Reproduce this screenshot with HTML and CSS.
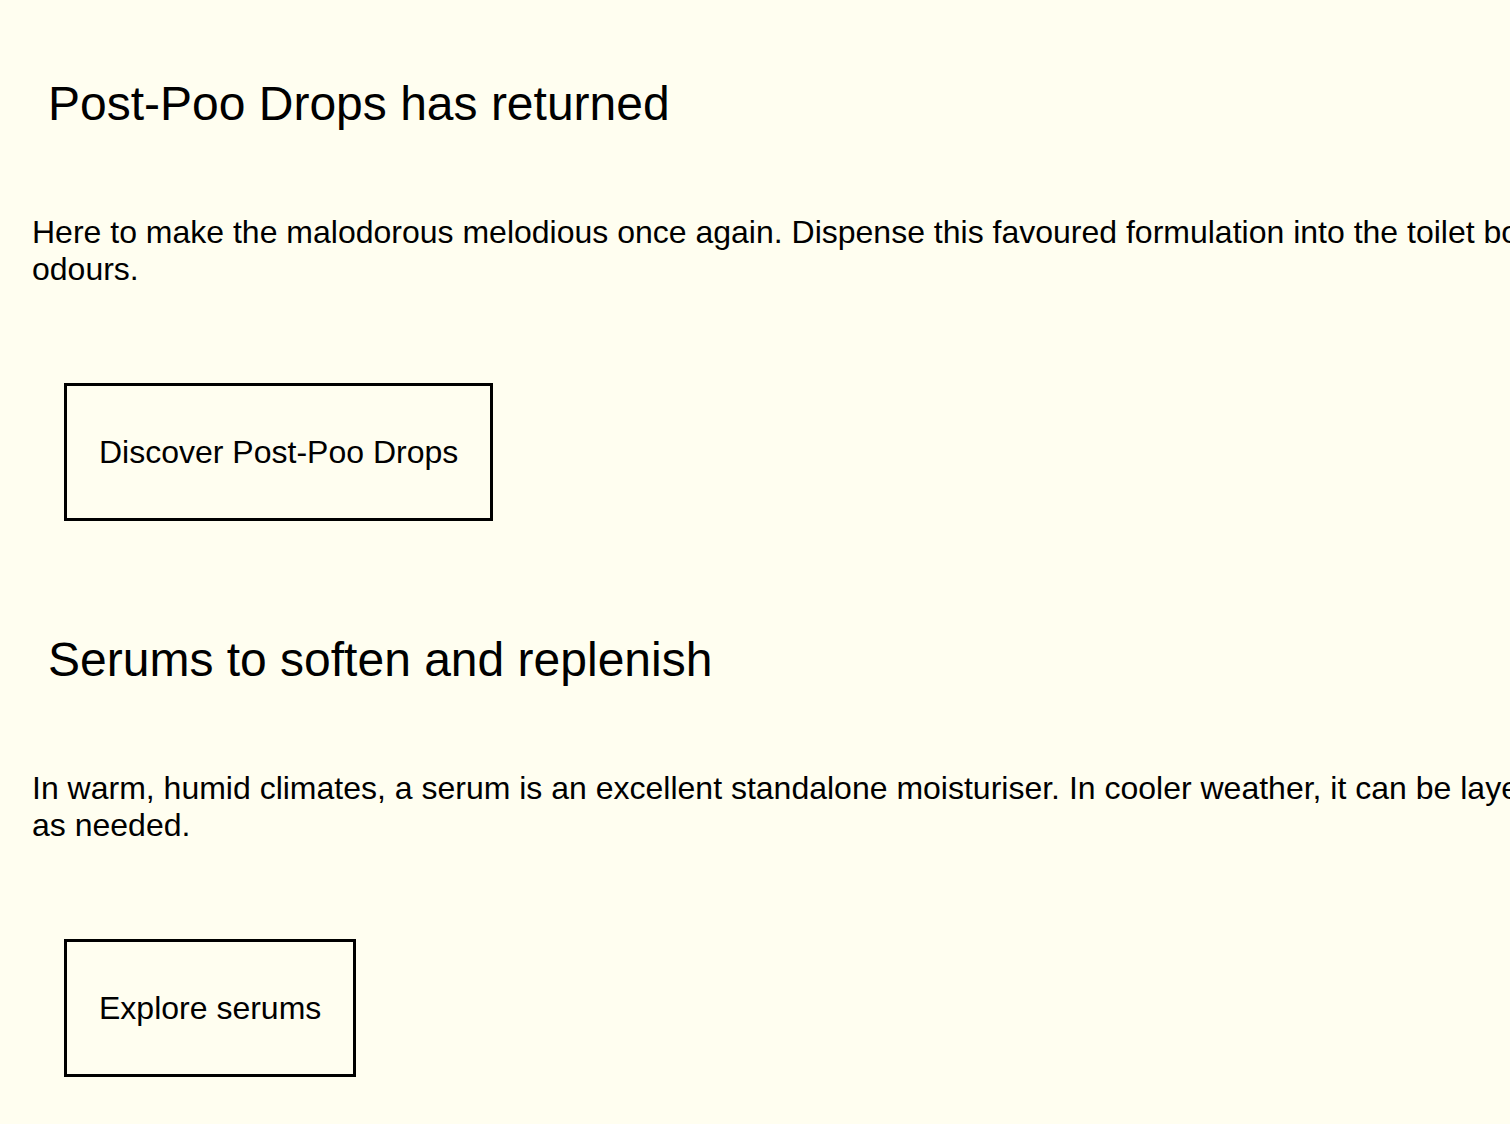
FILE: index.html
```html
<!DOCTYPE html>
<html lang="en">
<head>
<meta charset="utf-8">
<title>Post-Poo Drops</title>
<link rel="stylesheet" href="styles.css">
</head>
<body>
<main class="page">
  <section class="promo">
    <h2 class="promo-title">Post-Poo Drops has returned</h2>
    <p class="promo-text">Here to make the malodorous melodious once again. Dispense this favoured formulation into the toilet bowl before use to mask unwanted odours.</p>
    <a class="promo-btn" href="#">Discover Post-Poo Drops</a>
  </section>
  <section class="promo">
    <h2 class="promo-title">Serums to soften and replenish</h2>
    <p class="promo-text">In warm, humid climates, a serum is an excellent standalone moisturiser. In cooler weather, it can be layered beneath a cream or balm as&nbsp;needed.</p>
    <a class="promo-btn" href="#">Explore serums</a>
  </section>
</main>
</body>
</html>
```
FILE: styles.css
```css
html, body {
  margin: 0;
  padding: 0;
  background: #fffef0;
  overflow-x: hidden;
}
body {
  font-family: "Liberation Sans", Arial, sans-serif;
  color: #000;
}
.page {
  width: 2100px;
  padding: 0 32px;
}
.promo {
  display: flex;
  flex-direction: column;
  align-items: flex-start;
  padding-top: 74px;
  padding-bottom: 35px;
}
.promo-title {
  margin: 0 0 0 16px;
  font-size: 48px;
  font-weight: normal;
  line-height: 60px;
}
.promo-text {
  margin: 80px 0 0 0;
  font-size: 32px;
  line-height: 37px;
  width: 1955px;
}
.promo-btn {
  margin: 95px 0 0 32px;
  padding: 0 32px;
  height: 132px;
  display: flex;
  align-items: center;
  border: 3px solid #000;
  color: #000;
  text-decoration: none;
  font-size: 32px;
}
```
